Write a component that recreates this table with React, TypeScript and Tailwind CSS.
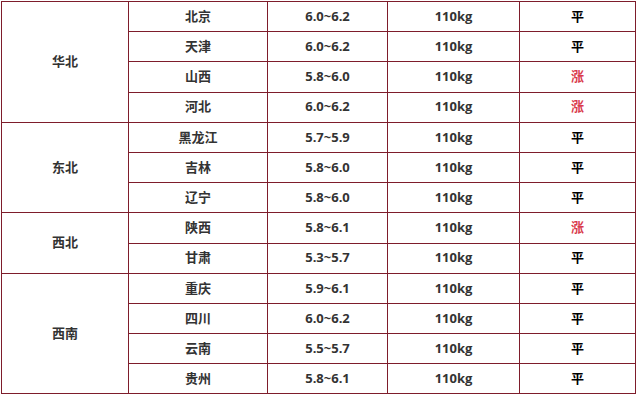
const rows: { region?: string; span?: number; prov: string; price: string; trend: string }[] = [
  { region: '华北', span: 4, prov: '北京', price: '6.0~6.2', trend: '平' },
  { prov: '天津', price: '6.0~6.2', trend: '平' },
  { prov: '山西', price: '5.8~6.0', trend: '涨' },
  { prov: '河北', price: '6.0~6.2', trend: '涨' },
  { region: '东北', span: 3, prov: '黑龙江', price: '5.7~5.9', trend: '平' },
  { prov: '吉林', price: '5.8~6.0', trend: '平' },
  { prov: '辽宁', price: '5.8~6.0', trend: '平' },
  { region: '西北', span: 2, prov: '陕西', price: '5.8~6.1', trend: '涨' },
  { prov: '甘肃', price: '5.3~5.7', trend: '平' },
  { region: '西南', span: 4, prov: '重庆', price: '5.9~6.1', trend: '平' },
  { prov: '四川', price: '6.0~6.2', trend: '平' },
  { prov: '云南', price: '5.5~5.7', trend: '平' },
  { prov: '贵州', price: '5.8~6.1', trend: '平' },
]

const cell = 'border border-[#7e1d2b] text-center align-middle p-0'

export default function App() {
  return (
    <div
      className="w-[640px] h-[400px] bg-white pl-px pt-px overflow-hidden"
      style={{ fontFamily: '"Open Sans", "Noto Sans CJK SC", sans-serif' }}
    >
      <table className="border-collapse table-fixed w-[634px] text-[13px] font-bold text-[#333]">
        <colgroup>
          <col className="w-[127px]" />
          <col className="w-[139px]" />
          <col className="w-[120px]" />
          <col className="w-[132px]" />
          <col className="w-[116px]" />
        </colgroup>
        <tbody>
          {rows.map((r) => (
            <tr key={r.prov} className="h-[30.2px]">
              {r.region && (
                <td rowSpan={r.span} className={cell}>
                  {r.region}
                </td>
              )}
              <td className={cell}>{r.prov}</td>
              <td className={cell}>{r.price}</td>
              <td className={cell}>110kg</td>
              <td className={`${cell} ${r.trend === '涨' ? 'text-[#d93a4c]' : 'text-black'}`}>
                {r.trend}
              </td>
            </tr>
          ))}
        </tbody>
      </table>
    </div>
  )
}
